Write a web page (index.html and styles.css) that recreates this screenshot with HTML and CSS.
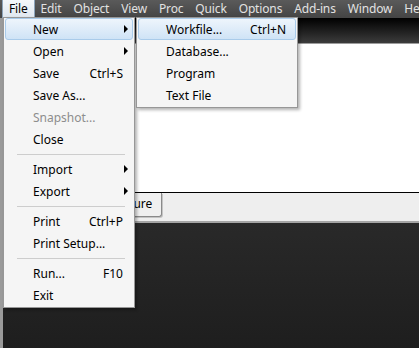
FILE: index.html
```html
<!DOCTYPE html>
<html lang="en">
  <head>
    <meta charset="UTF-8" />
    <title>File menu</title>
    <link rel="stylesheet" href="styles.css">
  </head>
  <body>
    <div class="window">
      <div class="menubar">
        <span class="top-item active">File</span>
        <span class="top-item">Edit</span>
        <span class="top-item">Object</span>
        <span class="top-item">View</span>
        <span class="top-item">Proc</span>
        <span class="top-item">Quick</span>
        <span class="top-item">Options</span>
        <span class="top-item">Add-ins</span>
        <span class="top-item">Window</span>
        <span class="top-item">Help</span>
      </div>
      <div class="workspace">
        <div class="toolbar"></div>
        <div class="sheet"></div>
        <div class="tabstrip">
          <span class="tab">Structure</span>
        </div>
        <div class="backdrop"></div>
      </div>

      <!-- open dropdowns -->
      <div class="menu file-menu">
        <div class="item hover"><span class="label">New</span><span class="arrow"></span></div>
        <div class="item"><span class="label">Open</span><span class="arrow"></span></div>
        <div class="item"><span class="label">Save</span><span class="key">Ctrl+S</span></div>
        <div class="item"><span class="label">Save As...</span></div>
        <div class="item disabled"><span class="label">Snapshot...</span></div>
        <div class="item"><span class="label">Close</span></div>
        <div class="sep"></div>
        <div class="item"><span class="label">Import</span><span class="arrow"></span></div>
        <div class="item"><span class="label">Export</span><span class="arrow"></span></div>
        <div class="sep"></div>
        <div class="item"><span class="label">Print</span><span class="key">Ctrl+P</span></div>
        <div class="item"><span class="label">Print Setup...</span></div>
        <div class="sep"></div>
        <div class="item"><span class="label">Run...</span><span class="key">F10</span></div>
        <div class="item"><span class="label">Exit</span></div>
      </div>

      <div class="menu new-menu">
        <div class="item hover"><span class="label">Workfile...</span><span class="key">Ctrl+N</span></div>
        <div class="item"><span class="label">Database...</span></div>
        <div class="item"><span class="label">Program</span></div>
        <div class="item"><span class="label">Text File</span></div>
      </div>
    </div>
  </body>
</html>
```

FILE: styles.css
```css
html, body {
  margin: 0;
  padding: 0;
}
body {
  font-family: 'Noto Sans', 'Open Sans', sans-serif;
  font-size: 12px;
  color: #000000;
  overflow: hidden;
}
.window {
  position: relative;
  width: 419px;
  height: 348px;
  display: flex;
  flex-direction: column;
  background-color: #1f1f1f;
  overflow: hidden;
}
.menubar {
  height: 18px;
  display: flex;
  padding-left: 2px;
  background: linear-gradient(#5a5a5a, #444444);
  flex-shrink: 0;
}
.top-item {
  padding: 0 5px;
  line-height: 18px;
  letter-spacing: -0.15px;
  color: #e2e2e2;
  white-space: nowrap;
  border: 1px solid transparent;
  border-top: none;
  border-bottom: none;
}
.top-item.active {
  color: #000000;
  padding: 0 6px;
  background: linear-gradient(#f4f7fa, #dfe7ef);
  border-color: #8da4ba;
}
.workspace {
  flex: 1;
  display: flex;
  flex-direction: column;
  border-left: 3px solid #9a9a9a;
}
.toolbar {
  height: 25px;
  background: linear-gradient(#000000, #3c3c3c);
  border-bottom: 1px solid #9c9c9c;
}
.sheet {
  height: 148px;
  background-color: #ffffff;
  border-bottom: 1px solid #000000;
}
.tabstrip {
  height: 28px;
  background-color: #eeeeee;
  border-bottom: 2px solid #a5a5a5;
  display: flex;
  padding-left: 88px;
}
.tab {
  height: 23px;
  line-height: 22px;
  padding: 0 9px 0 8px;
  background-color: #f0f0f0;
  border: 1px solid #8a8a8a;
  border-top: none;
  border-radius: 0 0 3px 3px;
  box-shadow: 1px 1px 0 #c4c4c4;
}
.backdrop {
  flex: 1;
  background: linear-gradient(#292929, #1e1e1e);
}
.menu {
  position: absolute;
  top: 17px;
  background-color: #f5f5f5;
  border: 1px solid #979797;
  padding: 0 1px 1px 1px;
  box-shadow: 2px 2px 3px rgba(0, 0, 0, 0.3);
}
.file-menu {
  left: 3px;
  width: 128px;
}
.new-menu {
  left: 136px;
  width: 158px;
}
.item {
  height: 22px;
  display: flex;
  align-items: center;
  padding: 0 9px 0 27px;
  white-space: nowrap;
  border: 1px solid transparent;
  border-radius: 3px;
  box-sizing: border-box;
}
.item.hover {
  background: linear-gradient(#eef5fc, #cfe3f6);
  border-color: #a9cbea;
}
.item.disabled {
  color: #8d8d8d;
}
.label {
  flex: 1;
}
.arrow {
  width: 0;
  height: 0;
  border-left: 4px solid #000000;
  border-top: 4px solid transparent;
  border-bottom: 4px solid transparent;
  margin-right: -5px;
}
.sep {
  height: 8px;
  display: flex;
  align-items: center;
  padding: 0 8px 0 12px;
}
.sep::before {
  content: '';
  flex: 1;
  height: 1px;
  background-color: #cdcdcd;
}
```
